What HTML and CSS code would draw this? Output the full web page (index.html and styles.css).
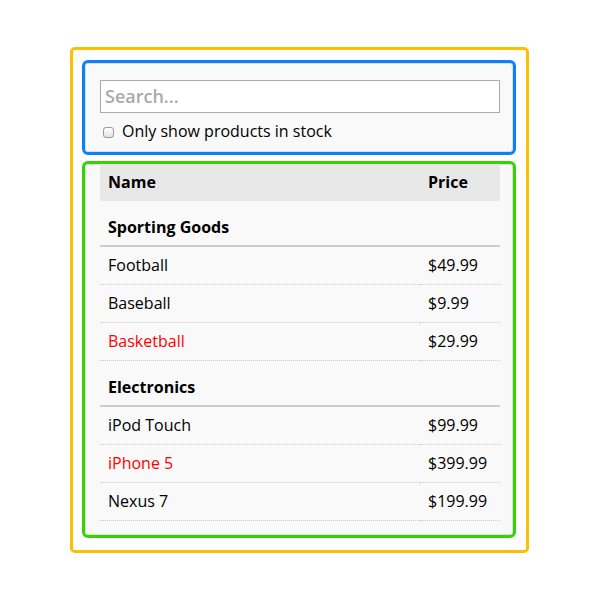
FILE: index.html
```html
<!DOCTYPE html>
<html lang="en">
<head>
<meta charset="utf-8">
<title>Filterable Product Table</title>
<link rel="stylesheet" href="styles.css">
</head>
<body>
<div class="page">
  <div class="app">
    <div class="search-bar">
      <input class="search-input" type="text" placeholder="Search...">
      <label class="stock-filter">
        <input class="stock-check" type="checkbox">
        <span>Only show products in stock</span>
      </label>
    </div>
    <div class="product-table">
      <table class="table">
        <colgroup>
          <col class="col-name">
          <col class="col-price">
        </colgroup>
        <thead>
          <tr class="head-row"><th>Name</th><th>Price</th></tr>
        </thead>
        <tbody>
          <tr class="category"><td colspan="2">Sporting Goods</td></tr>
          <tr class="product"><td>Football</td><td>$49.99</td></tr>
          <tr class="product"><td>Baseball</td><td>$9.99</td></tr>
          <tr class="product"><td class="out-of-stock">Basketball</td><td>$29.99</td></tr>
          <tr class="category"><td colspan="2">Electronics</td></tr>
          <tr class="product"><td>iPod Touch</td><td>$99.99</td></tr>
          <tr class="product"><td class="out-of-stock">iPhone 5</td><td>$399.99</td></tr>
          <tr class="product"><td>Nexus 7</td><td>$199.99</td></tr>
        </tbody>
      </table>
    </div>
  </div>
</div>
</body>
</html>
```

FILE: styles.css
```css
html, body {
  margin: 0;
  background: #ffffff;
}

body {
  font-family: "Open Sans", "DejaVu Sans", sans-serif;
  color: #000000;
  font-size: 16px;
}

.page {
  padding: 47px 0 0 70px;
}

.app {
  box-sizing: border-box;
  width: 459px;
  height: 506px;
  border: 3px solid #fdbf00;
  border-radius: 5px;
  padding: 10px 10px 12px 9px;
  display: flex;
  flex-direction: column;
  gap: 6px;
}

.search-bar {
  box-sizing: border-box;
  height: 95px;
  border: 3px solid #0a80ff;
  border-radius: 6px;
  background: #f9f9f9;
  box-shadow: inset 0 0 0 1px #dddddd;
  padding: 17px 13px 0 15px;
}

.search-input {
  display: block;
  box-sizing: border-box;
  width: 400px;
  height: 33px;
  margin: 0;
  border: 1px solid #aaaaaa;
  border-radius: 0;
  padding: 0 4px 1px;
  background: #ffffff;
  font-family: "Open Sans", "DejaVu Sans", sans-serif;
  font-weight: 600;
  font-size: 18px;
  color: #333333;
  outline: none;
}

.search-input::placeholder {
  color: #aaaaaa;
}

.stock-filter {
  display: flex;
  align-items: center;
  margin-top: 8px;
  height: 20px;
  line-height: 20px;
  font-size: 16px;
}

.stock-check {
  appearance: none;
  -webkit-appearance: none;
  box-sizing: border-box;
  width: 11px;
  height: 11px;
  margin: 2px 8px 0 3px;
  border: 1px solid #999999;
  border-radius: 3px;
  background: linear-gradient(#ffffff, #e4e4e4);
}

.product-table {
  flex: 1;
  box-sizing: border-box;
  border: 3px solid #35d400;
  border-radius: 6px;
  background: #f9f9f9;
  box-shadow: inset 0 0 0 1px #dddddd;
  padding: 0 13px 0 15px;
}

.table {
  width: 400px;
  table-layout: fixed;
  border-collapse: separate;
  border-spacing: 0;
}

.col-price {
  width: 80px;
}

.head-row th {
  background: #e8e8e8;
  text-align: left;
  font-weight: 700;
  padding: 6px 8px;
  line-height: 25px;
}

.category td {
  font-weight: 700;
  padding: 14px 8px 6px;
  line-height: 24px;
  border-bottom: 2px solid #cccccc;
}

.product td {
  padding: 6px 8px;
  line-height: 25px;
  border-bottom: 1px dotted #cccccc;
  white-space: nowrap;
}

.out-of-stock {
  color: #ff0000;
}
```
